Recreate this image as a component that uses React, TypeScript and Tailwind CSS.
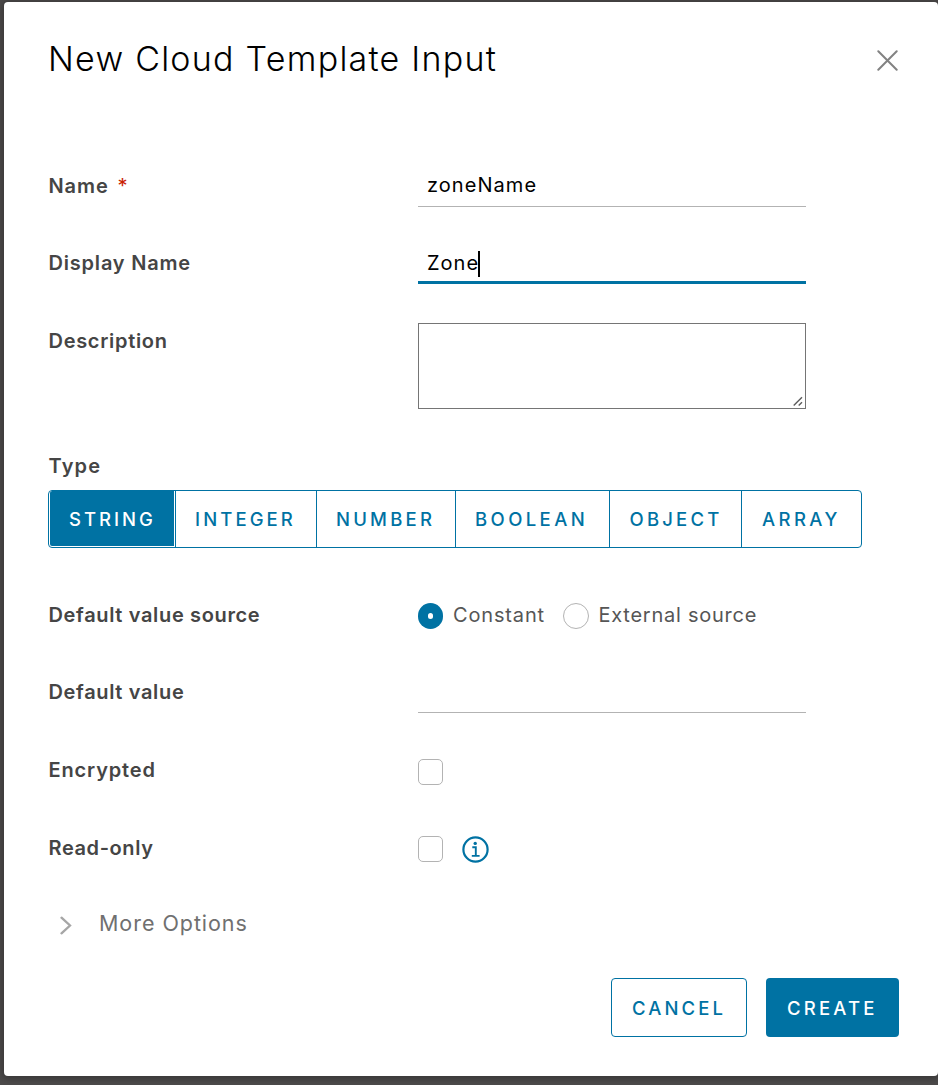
import type { ReactNode } from 'react';

function Row({ label, tracking, className, children }: { label: ReactNode; tracking: string; className: string; children?: ReactNode }) {
  return (
    <div className={`flex items-start ${className}`}>
      <div className={`w-[370px] shrink-0 pl-[0.5px] whitespace-nowrap text-[20px] leading-6 font-[580] text-[#454545] ${tracking}`}>{label}</div>
      {children}
    </div>
  );
}

const types = [
  { name: 'INTEGER', size: 'w-[141px] pl-[19px]', tracking: 'tracking-[3.1px]' },
  { name: 'NUMBER', size: 'w-[139px] pl-[19px]', tracking: 'tracking-[3.2px]' },
  { name: 'BOOLEAN', size: 'w-[154px] pl-[19px]', tracking: 'tracking-[3.4px]' },
  { name: 'OBJECT', size: 'w-[132px] pl-[19.5px]', tracking: 'tracking-[3.2px]' },
  { name: 'ARRAY', size: 'w-[120px] pl-[20px]', tracking: 'tracking-[3.4px]' },
];

export default function App() {
  return (
    <div className="h-[1085px] w-[938px] overflow-hidden bg-[#4c4a4a] pt-[2px] pl-1 font-['Inter',sans-serif]">
      <div className="flex h-[1074px] w-[934px] flex-col rounded-[4px] bg-white pr-[39px] pl-[44px] shadow-[0_1px_6px_2px_rgba(0,0,0,0.25)]">
        <header className="flex h-[172px] items-start justify-between pt-[37px]">
          <h1 className="text-[34px] leading-[40px] font-light tracking-[1.25px] whitespace-nowrap text-black">New Cloud Template Input</h1>
          <svg className="mt-[11px] mr-[1px] h-[21px] w-[21px]" viewBox="0 0 21 21" fill="none" stroke="#828282" strokeWidth="2">
            <path d="M1.3 1.3L19.7 19.7M19.7 1.3L1.3 19.7" strokeLinecap="round" />
          </svg>
        </header>

        <Row
          className="h-[77px]"
          tracking="tracking-[0.9px]"
          label={
            <span className="flex">
              Name
              <span className="ml-[9px] font-normal text-[#c92100]">*</span>
            </span>
          }
        >
          <div className="h-[33px] w-[388px] border-b border-[#b3b3b3] pl-[9px] text-[20px] leading-[23px] font-[370] tracking-[1.05px] text-black">zoneName</div>
        </Row>
        <Row className="h-[78px]" tracking="tracking-[0.8px]" label="Display Name">
          <div className="flex h-[33px] w-[388px] border-b-[3px] border-[#0072a3] pl-[9px] text-[20px] leading-6 font-[370] tracking-[1px] text-black">
            <span className="w-[51px]">Zone</span>
            <span className="h-[26px] w-[2px] bg-black" />
          </div>
        </Row>
        <Row className="h-[125px]" tracking="tracking-[0.7px]" label="Description">
          <div className="-mt-[6px] flex h-[86px] w-[388px] items-end justify-end border border-[#757575] p-[2px]">
            <svg className="h-[10px] w-[10px]" viewBox="0 0 10 10" fill="none" stroke="#5c5c5c" strokeWidth="1.4">
              <path d="M0.7 9.5L9 1.2M5.7 9.5L9 6.2" />
            </svg>
          </div>
        </Row>
        <Row className="h-[36px]" tracking="tracking-[1.2px]" label="Type" />

        <div className="mb-[55px] flex h-[58px] w-[814px] shrink-0 overflow-hidden rounded-[4px] border border-[#0072a3] text-[18.5px] leading-[56px] font-[460] text-[#0072a3]">
          <div className="w-[126px] pr-px pb-px pl-px">
            <div className="h-[55px] rounded-l-[2px] bg-[#0072a3] pl-[19px] leading-[56px] tracking-[3px] text-white">STRING</div>
          </div>
          {types.map((t) => (
            <div key={t.name} className={`h-[56px] shrink-0 border-l border-[#0072a3] ${t.size} ${t.tracking}`}>{t.name}</div>
          ))}
        </div>

        <Row className="h-[77px]" tracking="tracking-[0.65px]" label="Default value source">
          <div className="flex text-[20px] leading-6 font-[380] whitespace-nowrap text-[#565656]">
            <span className="flex h-[26px] w-[25px] items-center justify-center rounded-full bg-[#0072a3]">
              <span className="h-[6px] w-[5px] rounded-full bg-white" />
            </span>
            <span className="w-[109px] pl-[10px] tracking-[0.85px]">Constant</span>
            <span className="ml-[11px] h-[26px] w-[26px] rounded-full border border-[#b3b3b3]" />
            <span className="pl-[9.5px] tracking-[0.75px]">External source</span>
          </div>
        </Row>
        <Row className="h-[78px]" tracking="tracking-[0.65px]" label="Default value">
          <div className="h-[33px] w-[388px] border-b border-[#b3b3b3]" />
        </Row>
        <Row className="h-[78px]" tracking="tracking-[0.85px]" label="Encrypted">
          <div className="mt-px h-[26px] w-[25px] rounded-[5px] border border-[#b3b3b3]" />
        </Row>
        <Row className="h-[76px]" tracking="tracking-[0.6px]" label="Read-only">
          <div className="h-[26px] w-[25px] rounded-[5px] border border-[#b3b3b3]" />
          <svg className="ml-[19px] h-[27px] w-[27px]" viewBox="0 0 27 27" fill="none" stroke="#0072a3">
            <circle cx="13.5" cy="13.5" r="12.1" strokeWidth="2.2" />
            <circle cx="13.2" cy="7.4" r="1.7" fill="#0072a3" stroke="none" />
            <path d="M10.3 11.3H13.8V19.8M9.8 19.9H17.6" strokeWidth="1.9" />
          </svg>
        </Row>
        <div className="flex h-[66px] items-start">
          <svg className="mt-[3.5px] ml-[12px] h-[19px] w-[13px]" viewBox="0 0 13 19" fill="none" stroke="#a6a6a6" strokeWidth="2.3">
            <path d="M1.5 1.7L10 9.5L1.5 17.3" strokeLinecap="round" />
          </svg>
          <span className="-mt-px pl-[26px] text-[21.5px] leading-6 font-[370] tracking-[0.95px] text-[#707070]">More Options</span>
        </div>
        <footer className="flex justify-end gap-[19px] text-[18.5px] font-[460]">
          <button className="h-[59px] w-[136px] rounded-[4px] border border-[#0072a3] pt-[2px] pl-[20px] text-left tracking-[3.1px] text-[#0072a3]">CANCEL</button>
          <button className="h-[59px] w-[133px] rounded-[4px] bg-[#0072a3] pt-[2px] pl-[21px] text-left tracking-[3.2px] text-white">CREATE</button>
        </footer>
      </div>
    </div>
  );
}
